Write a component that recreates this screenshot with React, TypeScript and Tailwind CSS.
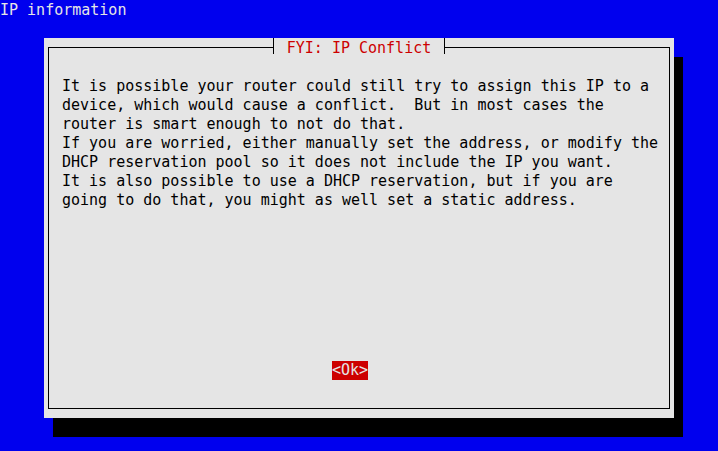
import React from "react";

const lines = [
  "It is possible your router could still try to assign this IP to a",
  "device, which would cause a conflict.  But in most cases the",
  "router is smart enough to not do that.",
  "If you are worried, either manually set the address, or modify the",
  "DHCP reservation pool so it does not include the IP you want.",
  "It is also possible to use a DHCP reservation, but if you are",
  "going to do that, you might as well set a static address.",
];

export default function App() {
  return (
    <div
      className="w-[718px] h-[451px] overflow-hidden bg-[#0000ee] text-[15px] leading-[19px]"
      style={{ fontFamily: '"DejaVu Sans Mono", "Liberation Mono", monospace' }}
    >
      <div className="h-[19px] text-[#e5e5e5] whitespace-pre">
        <span className="relative top-px">IP information</span>
      </div>
      <div className="mt-[19px] ml-[44px] w-[630px] h-[380px] bg-[#e5e5e5] shadow-[9px_19px_0_0_#000] pt-[9px] px-[4px] pb-[9px]">
        <div className="relative h-full border border-black flex flex-col">
          <div className="absolute left-[224px] top-[-10px] w-[172px] h-[19px] bg-[#e5e5e5] flex">
            <div className="w-px bg-black mb-[3px]" />
            <div className="flex-1 text-center text-[#cd0000] whitespace-pre">
              <span className="relative top-px">FYI: IP Conflict</span>
            </div>
            <div className="w-px bg-black mb-[3px]" />
          </div>
          <div className="pl-[13px] pt-[29px] text-black whitespace-pre">
            {lines.map((l, i) => (
              <div key={i} className="h-[19px]">{l}</div>
            ))}
          </div>
          <div className="mt-[151px] pl-[283px]">
            <span className="inline-block h-[19px] bg-[#cd0000] text-[#e5e5e5] whitespace-pre">{"<Ok>"}</span>
          </div>
        </div>
      </div>
    </div>
  );
}
